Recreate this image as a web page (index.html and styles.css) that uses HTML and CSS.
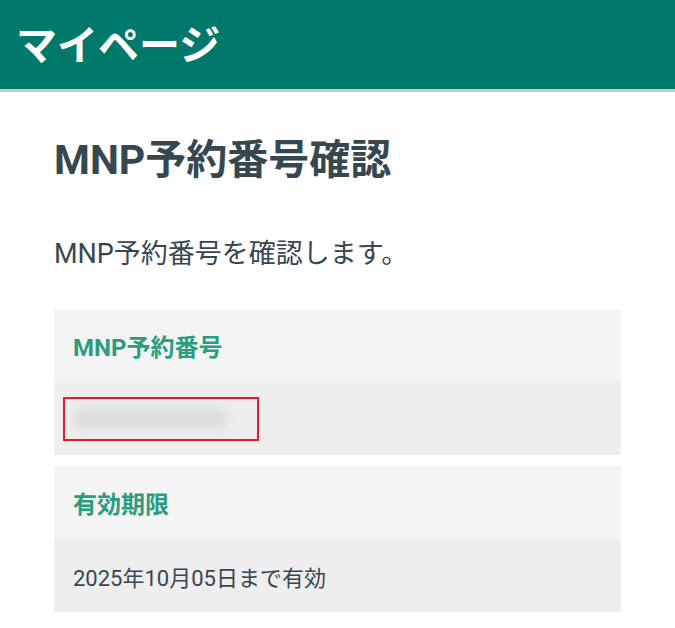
FILE: index.html
```html
<!DOCTYPE html>
<html lang="ja">
<head>
<meta charset="utf-8">
<title>マイページ</title>
<link rel="stylesheet" href="styles.css">
</head>
<body>
<header class="app-bar">
  <div class="app-title">マイページ</div>
</header>
<main class="content">
  <h1 class="page-title">MNP予約番号確認</h1>
  <p class="lead">MNP予約番号を確認します。</p>
  <section class="info-card">
    <div class="info-label">MNP予約番号</div>
    <div class="info-value">
      <span class="masked"><span class="blur"></span></span>
    </div>
  </section>
  <section class="info-card">
    <div class="info-label">有効期限</div>
    <div class="info-value">2025年10月05日まで有効</div>
  </section>
</main>
</body>
</html>
```
FILE: styles.css
```css
html, body {
  margin: 0;
  padding: 0;
  background: #ffffff;
}
body {
  font-family: Roboto, "Noto Sans CJK JP", sans-serif;
  color: #37474f;
}
.app-bar {
  height: 89px;
  background: #00796b;
  border-bottom: 3px solid #c9c9c9;
  display: flex;
  align-items: center;
  padding-left: 16px;
}
.app-title {
  color: #ffffff;
  font-size: 41px;
  font-weight: 700;
  line-height: 1;
  margin-top: 4px;
}
.content {
  padding: 0 54px;
}
.page-title {
  margin: 40px 0 0;
  font-size: 41px;
  font-weight: 700;
  line-height: 56px;
  color: #37474f;
}
.lead {
  margin: 48px 0 0;
  font-size: 27px;
  line-height: 36px;
  color: #37474f;
}
.info-card {
  margin-top: 37px;
}
.info-card + .info-card {
  margin-top: 11px;
}
.info-label {
  height: 73px;
  display: flex;
  align-items: center;
  padding-left: 19px;
  background: #f4f4f4;
  color: #2a9d7f;
  font-size: 24px;
  font-weight: 700;
}
.info-value {
  height: 73px;
  display: flex;
  align-items: center;
  padding-left: 19px;
  background: #eeeeee;
  color: #37474f;
  font-size: 22px;
}
.masked {
  box-sizing: border-box;
  margin-left: -10px;
  width: 196px;
  height: 44px;
  border: 2px solid #e8192c;
  display: flex;
  align-items: center;
  padding-left: 8px;
  overflow: hidden;
}
.blur {
  display: block;
  width: 155px;
  height: 20px;
  background: #d9dbdb;
  border-radius: 10px;
  filter: blur(6px);
}
```
